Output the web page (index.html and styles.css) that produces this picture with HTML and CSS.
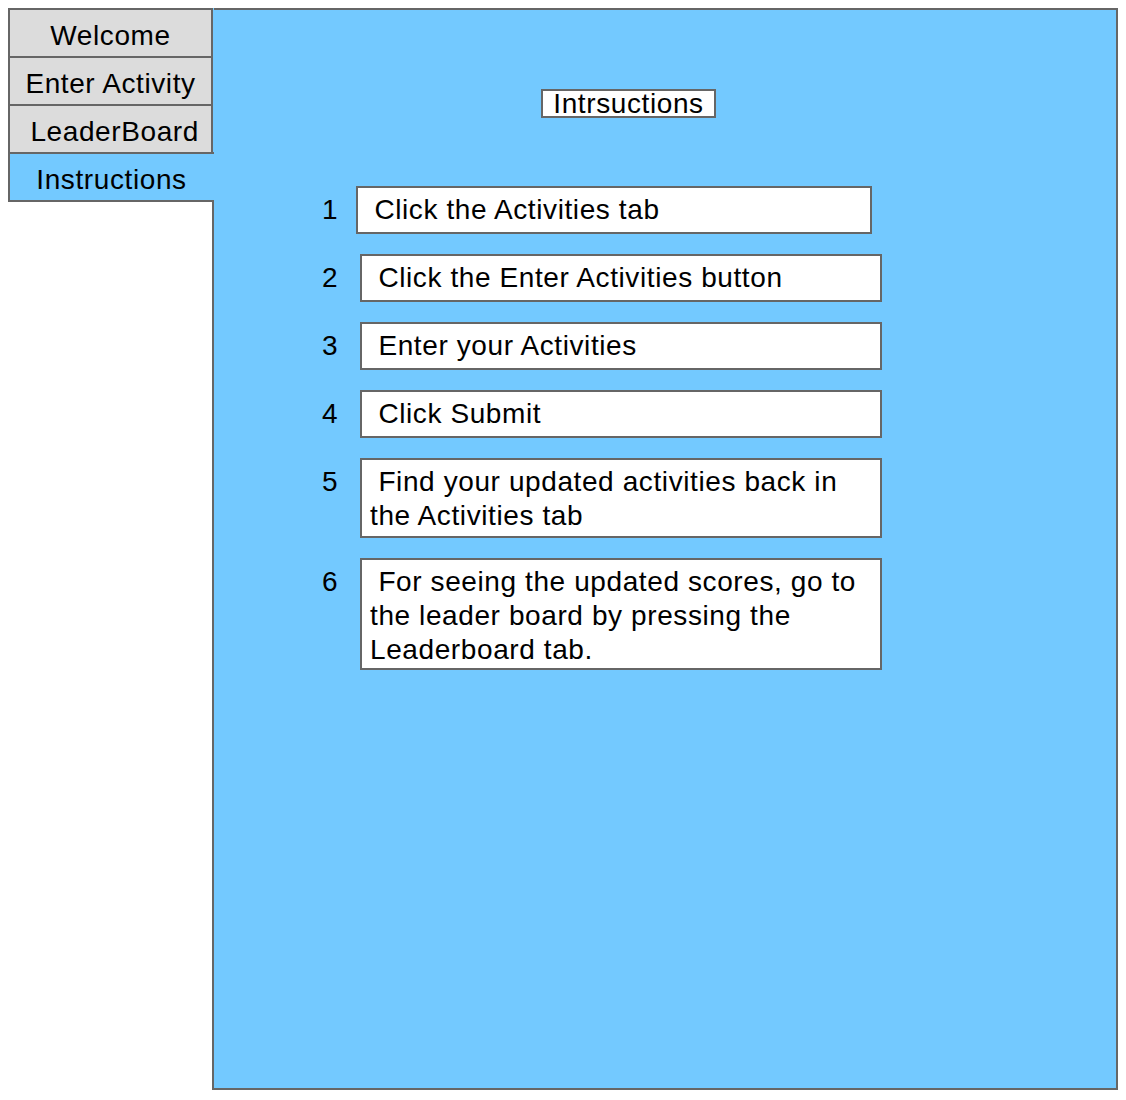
FILE: index.html
```html
<!DOCTYPE html>
<html lang="en">
<head>
<meta charset="utf-8">
<title>Instructions</title>
<link rel="stylesheet" href="styles.css">
</head>
<body>
<div class="app">
  <nav class="tabs">
    <div class="tab">Welcome</div>
    <div class="tab">Enter Activity</div>
    <div class="tab">&nbsp;LeaderBoard</div>
    <div class="tab tab-active">Instructions</div>
  </nav>
  <main class="panel">
    <div class="title">Intrsuctions</div>
    <ol class="steps">
      <li class="step step-first"><span class="num">1</span><div class="box">&nbsp;Click the Activities tab</div></li>
      <li class="step"><span class="num">2</span><div class="box">&nbsp;Click the Enter Activities button</div></li>
      <li class="step"><span class="num">3</span><div class="box">&nbsp;Enter your Activities</div></li>
      <li class="step"><span class="num">4</span><div class="box">&nbsp;Click Submit</div></li>
      <li class="step"><span class="num">5</span><div class="box box-two">&nbsp;Find your updated activities back in the Activities tab</div></li>
      <li class="step"><span class="num">6</span><div class="box box-three">&nbsp;For seeing the updated scores, go to the leader board by pressing the Leaderboard tab.</div></li>
    </ol>
  </main>
</div>
</body>
</html>
```
FILE: styles.css
```css
* { box-sizing: border-box; }

body {
  margin: 8px;
  font-family: "Liberation Sans", Arial, sans-serif;
  font-size: 28px;
  letter-spacing: 0.6px;
  color: #000;
  background: #fff;
}

.app {
  display: flex;
  align-items: flex-start;
}

.tabs {
  position: relative;
  z-index: 1;
  width: 206px;
  margin-right: -2px;
  flex: none;
  display: flex;
  flex-direction: column;
  background: #73c9ff;
}

.tab {
  width: 205px;
  height: 48px;
  line-height: 46px;
  padding-top: 3px;
  border: 2px solid #666;
  border-bottom: none;
  background: #dcdcdc;
  text-align: center;
  white-space: nowrap;
  overflow: visible;
}

.tab-active {
  width: 206px;
  height: 50px;
  border-right: none;
  border-bottom: 2px solid #666;
  background: #73c9ff;
  padding-right: 1px;
}

.panel {
  width: 906px;
  height: 1082px;
  flex: none;
  border: 2px solid #666;
  background: #73c9ff;
  display: flex;
  flex-direction: column;
  align-items: flex-start;
}

.title {
  margin-top: 79px;
  margin-left: 327px;
  width: 175px;
  height: 29px;
  line-height: 25px;
  border: 2px solid #666;
  background: #fff;
  text-align: center;
  white-space: nowrap;
}

.steps {
  list-style: none;
  margin: 68px 0 0 106px;
  padding: 0;
  display: flex;
  flex-direction: column;
  gap: 20px;
}

.step {
  display: flex;
  align-items: flex-start;
}

.num {
  width: 18px;
  flex: none;
  padding-top: 7px;
  padding-left: 2px;
  line-height: 34px;
  letter-spacing: 0;
}

.box {
  width: 522px;
  min-height: 48px;
  margin-left: 22px;
  padding: 5px 8px 0;
  line-height: 34px;
  border: 2px solid #666;
  background: #fff;
}

.box-two { padding-bottom: 3px; }

.box-three { padding-bottom: 1px; }

.step-first .box {
  width: 516px;
  margin-left: 18px;
}
```
